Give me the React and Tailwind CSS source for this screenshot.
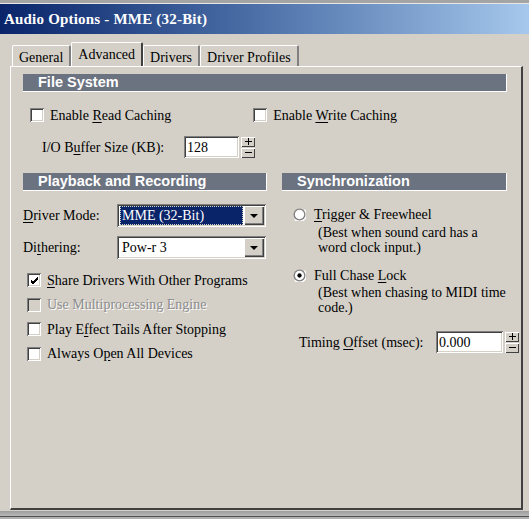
import React from "react";

const serif = { fontFamily: '"Liberation Serif", "Times New Roman", serif' };

function U({ children }) {
  return <span className="underline underline-offset-2">{children}</span>;
}

function Checkbox({ checked, disabled }) {
  return (
    <div className="w-[14px] h-[14px] shrink-0 bg-white shadow-[inset_1px_1px_0_#808080,inset_-1px_-1px_0_#ffffff,inset_2px_2px_0_#404040,inset_-2px_-2px_0_#d4d0c8] flex items-center justify-center">
      {disabled && <div className="w-[10px] h-[10px] bg-[#d4d0c8]" />}
      {checked && (
        <svg width="9" height="9" viewBox="0 0 9 9">
          <path d="M1 4 L3 6 L8 1 M1 5 L3 7 L8 2 M1 6 L3 8 L8 3" stroke="#000" strokeWidth="1" fill="none" />
        </svg>
      )}
    </div>
  );
}

function Radio({ checked }) {
  return (
    <svg width="13" height="13" viewBox="0 0 12 12" className="shrink-0">
      <circle cx="6" cy="6" r="5.5" fill="#808080" />
      <path d="M1.5 10.5 A6 6 0 0 0 10.5 1.5" stroke="#fff" strokeWidth="1.2" fill="none" />
      <circle cx="6" cy="6" r="4.3" fill="#fff" />
      {checked && <circle cx="6" cy="6" r="2" fill="#000" />}
    </svg>
  );
}

function CheckRow({ checked, disabled, children, className = "" }) {
  return (
    <div className={"flex items-center gap-[6px] h-[20px] " + className}>
      <Checkbox checked={checked} disabled={disabled} />
      <span className={disabled ? "text-[#8c8c8c] [text-shadow:1px_1px_0_#ffffff]" : "text-black"}>{children}</span>
    </div>
  );
}

function Header({ children, className = "" }) {
  return (
    <div
      className={"h-[18px] bg-[#6b7280] border-r border-b border-white flex items-center pl-[15px] text-white font-bold text-[14.5px] " + className}
      style={{ fontFamily: '"Liberation Sans", Arial, sans-serif' }}
    >
      {children}
    </div>
  );
}

function Spin() {
  return (
    <div className="flex flex-col gap-px ml-[2px] shrink-0">
      {["+", "−"].map((s) => (
        <div
          key={s}
          className="w-[14px] h-[10px] bg-[#d4d0c8] shadow-[inset_1px_1px_0_#ffffff,inset_-1px_-1px_0_#404040] flex items-center justify-center"
        >
          <svg width="9" height="7" viewBox="0 0 9 7">
            {s === "+" && <path d="M1 3.5 H8 M4.5 0 V7" stroke="#000" strokeWidth="1" />}
            {s !== "+" && <path d="M1 3.5 H8" stroke="#000" strokeWidth="1" />}
          </svg>
        </div>
      ))}
    </div>
  );
}

function TextBox({ value, width }) {
  return (
    <div
      className="h-[22px] shrink-0 bg-white pl-[3px] flex items-center shadow-[inset_1px_1px_0_#808080,inset_-1px_-1px_0_#ffffff,inset_2px_2px_0_#404040,inset_-2px_-2px_0_#d4d0c8]"
      style={{ width }}
    >
      {value}
    </div>
  );
}

function Select({ value, highlighted }) {
  return (
    <div className="w-[149px] h-[23px] shrink-0 bg-white p-[2px] flex shadow-[inset_1px_1px_0_#808080,inset_-1px_-1px_0_#ffffff,inset_2px_2px_0_#404040,inset_-2px_-2px_0_#d4d0c8]">
      <div className="flex-1 flex items-center pl-px pr-px">
        <span className={highlighted ? "bg-[#0a246a] text-white w-full pl-px leading-[17px] border border-dotted border-[#d4d0c8]" : "pl-[2px]"}>
          {value}
        </span>
      </div>
      <div className="w-[20px] h-[19px] bg-[#d4d0c8] shadow-[inset_1px_1px_0_#ffffff,inset_-1px_-1px_0_#404040,inset_-2px_-2px_0_#808080] flex items-center justify-center">
        <svg width="8" height="4" viewBox="0 0 8 4">
          <path d="M0 0 H8 L4 4 Z" fill="#000" />
        </svg>
      </div>
    </div>
  );
}

function Tab({ label, active }) {
  return active ? (
    <div className="h-[24px] -mb-px px-[6px] bg-[#d4d0c8] border-t border-l border-white border-r-2 border-r-[#404040] rounded-t-[2px] relative z-10 flex items-start pt-[1px]">
      {label}
    </div>
  ) : (
    <div className="h-[21px] mt-[3px] px-[6px] border-t border-l border-white border-r-2 border-r-[#808080] rounded-t-[2px] flex items-start pt-[1px]">
      {label}
    </div>
  );
}

export default function App() {
  return (
    <div className="w-[529px] h-[519px] bg-[#d4d0c8] overflow-hidden flex flex-col text-[14px] text-black" style={serif}>
      <div className="h-[3px] bg-[#a4a4a4]" />
      <div className="h-px bg-[#e8e8e8]" />
      <div className="h-[30px] bg-gradient-to-r from-[#0a246a] via-[#4f72aa] to-[#a6c8ec] flex items-center pl-[4px] text-white font-bold text-[15px] tracking-[0.2px]">
        Audio Options - MME (32-Bit)
      </div>
      <div className="h-[8px]" />
      <div className="flex pl-[12px] h-[24px] items-start">
        <Tab label="General" />
        <Tab label="Advanced" active />
        <Tab label="Drivers" />
        <Tab label="Driver Profiles" />
      </div>
      <div className="ml-[10px] w-[513px] h-[444px] border-t border-l border-white border-r-2 border-b-2 border-r-[#404040] border-b-[#404040] pl-[12px] pt-[7px] pr-[15px]">
        <Header className="w-[484px]">File System</Header>
        <div className="flex items-center mt-[13px] pl-[7px]">
          <CheckRow>
            Enable <U>R</U>ead Caching
          </CheckRow>
          <CheckRow className="ml-[82px]">
            Enable <U>W</U>rite Caching
          </CheckRow>
        </div>
        <div className="flex items-center mt-[11px] pl-[19px]">
          <span className="w-[142px] shrink-0">
            I/O B<U>u</U>ffer Size (KB):
          </span>
          <TextBox value="128" width={55} />
          <Spin />
        </div>
        <div className="flex mt-[15px]">
          <div className="w-[244px] shrink-0">
            <Header>Playback and Recording</Header>
            <div className="flex items-center mt-[13px]">
              <span className="w-[94px] shrink-0">
                <U>D</U>river Mode:
              </span>
              <Select value="MME (32-Bit)" highlighted />
            </div>
            <div className="flex items-center mt-[9px]">
              <span className="w-[94px] shrink-0">
                Di<U>t</U>hering:
              </span>
              <Select value="Pow-r 3" />
            </div>
            <div className="pl-[4px] mt-[11px] flex flex-col gap-[4.5px]">
              <CheckRow checked>
                <U>S</U>hare Drivers With Other Programs
              </CheckRow>
              <CheckRow disabled>Use Multiprocessing Engine</CheckRow>
              <CheckRow>
                Play E<U>f</U>fect Tails After Stopping
              </CheckRow>
              <CheckRow>
                Always O<U>p</U>en All Devices
              </CheckRow>
            </div>
          </div>
          <div className="w-[225px] shrink-0 ml-[15px]">
            <Header>Synchronization</Header>
            <div className="flex items-center gap-[8px] mt-[14px] pl-[11px] h-[18px]">
              <Radio />
              <span>
                <U>T</U>rigger &amp; Freewheel
              </span>
            </div>
            <div className="pl-[36px] leading-[15px] mt-[2px]">
              (Best when sound card has a
              <br />
              word clock input.)
            </div>
            <div className="flex items-center gap-[8px] mt-[11px] pl-[11px] h-[18px]">
              <Radio checked />
              <span>
                Full Chase <U>L</U>ock
              </span>
            </div>
            <div className="pl-[36px] leading-[15px] mt-[1px]">
              (Best when chasing to MIDI time
              <br />
              code.)
            </div>
            <div className="flex items-center mt-[16px] pl-[17px]">
              <span className="w-[137px] shrink-0">
                Timing <U>O</U>ffset (msec):
              </span>
              <TextBox value="0.000" width={67} />
              <Spin />
            </div>
          </div>
        </div>
      </div>
      <div className="h-[1px]" />
      <div className="h-[5px] bg-gradient-to-b from-[#9c9c9c] to-[#b8b8b8]" />
      <div className="h-px bg-[#505050]" />
      <div className="flex-1 bg-[#b0b0b0]" />
    </div>
  );
}
